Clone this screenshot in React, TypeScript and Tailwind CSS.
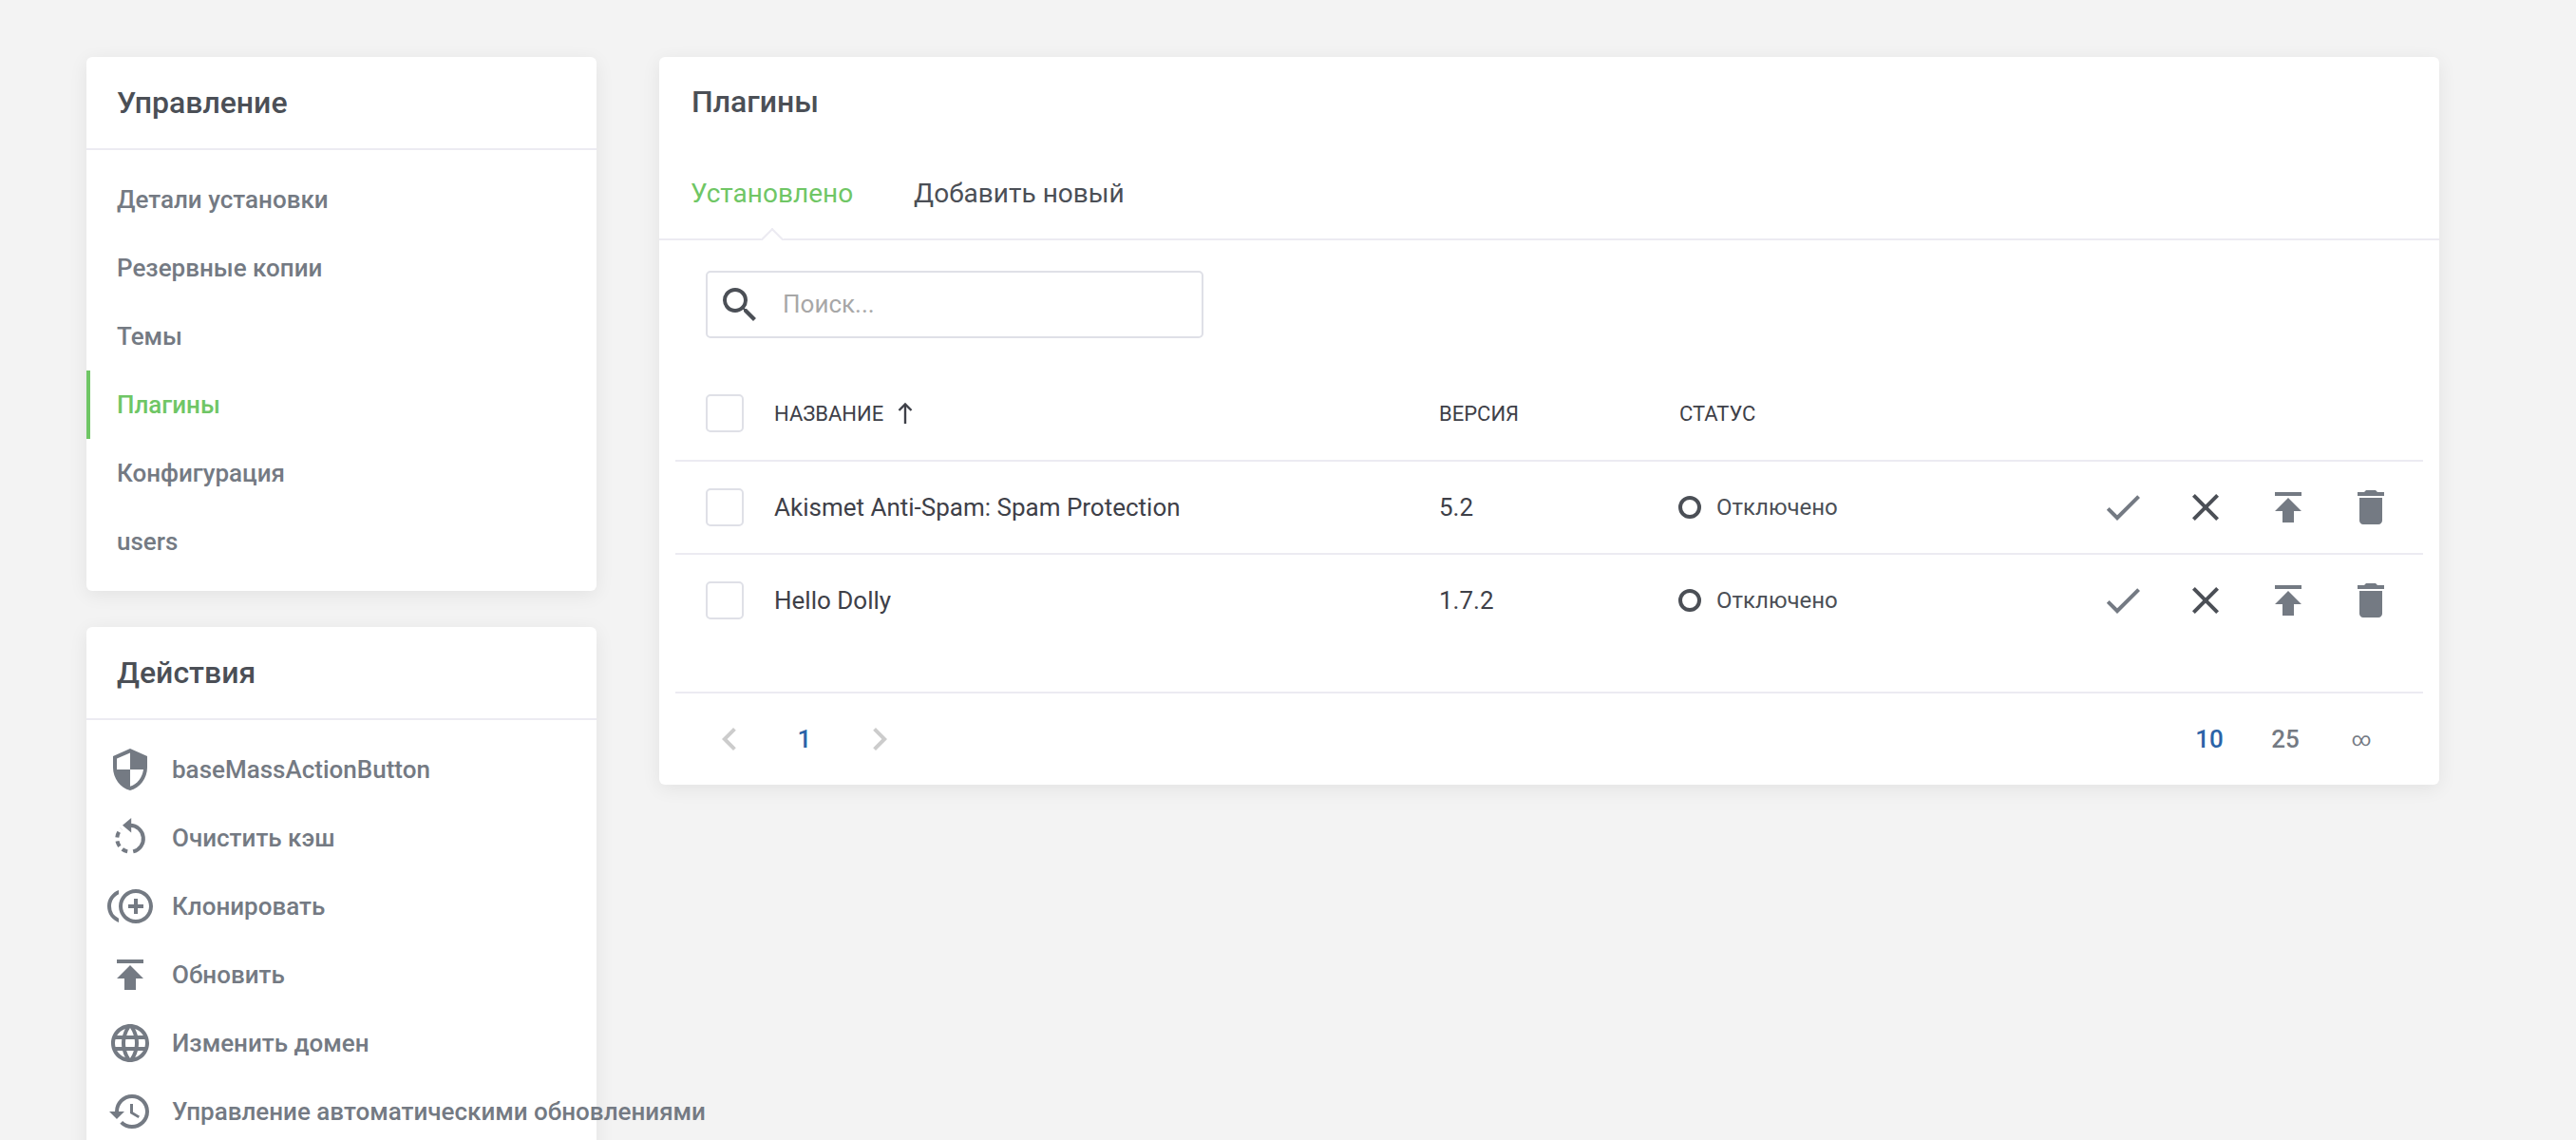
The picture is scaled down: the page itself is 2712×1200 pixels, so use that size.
import { MdSearch, MdCheck, MdClose, MdPublish, MdDelete, MdSecurity, MdControlPointDuplicate, MdLanguage, MdHistory, MdChevronLeft, MdChevronRight } from 'react-icons/md';
import type { ReactNode } from 'react';

const navItems = ['Детали установки', 'Резервные копии', 'Темы', 'Плагины', 'Конфигурация', 'users'];

const plugins = [
  { name: 'Akismet Anti-Spam: Spam Protection', version: '5.2' },
  { name: 'Hello Dolly', version: '1.7.2' },
];

function ClearCacheIcon() {
  return (
    <svg viewBox="0 0 24 24" width="48" height="48" fill="none" stroke="currentColor" strokeWidth="2">
      <path d="M12.6 1.5 L8 5.4 L12.6 9.3 Z" fill="currentColor" stroke="none" />
      <path d="M12 5.4 A7 7 0 0 1 13.6 19.2" />
      <path d="M10.6 19.2 A7 7 0 0 1 7.4 7.2" strokeDasharray="3 2" />
    </svg>
  );
}

function SortArrow() {
  return (
    <svg viewBox="0 0 16 24" width="16" height="24" fill="none" stroke="currentColor" strokeWidth="2.4">
      <path d="M8 23 V3" />
      <path d="M1.5 9 L8 2.5 L14.5 9" />
    </svg>
  );
}

const actions: { icon: ReactNode; label: string }[] = [
  { icon: <MdSecurity size={48} />, label: 'baseMassActionButton' },
  { icon: <ClearCacheIcon />, label: 'Очистить кэш' },
  { icon: <MdControlPointDuplicate size={48} />, label: 'Клонировать' },
  { icon: <MdPublish size={48} />, label: 'Обновить' },
  { icon: <MdLanguage size={48} />, label: 'Изменить домен' },
  { icon: <MdHistory size={48} />, label: 'Управление автоматическими обновлениями' },
];

function Checkbox() {
  return <div className="w-[40px] h-[40px] bg-white border-2 border-[#dfe0e7] rounded-[5px] shrink-0" />;
}

function Card({ children, className = '' }: { children: ReactNode; className?: string }) {
  return <div className={`bg-white rounded-[6px] shadow-[0_4px_20px_rgba(0,0,0,0.07)] ${className}`}>{children}</div>;
}

function CardHeader({ title }: { title: string }) {
  return (
    <div className="h-[98px] pl-[32px] flex items-center border-b-2 border-[#ecebf2] text-[32px] font-medium text-[#4b4f56]">
      {title}
    </div>
  );
}

export default function App() {
  return (
    <div className="h-screen overflow-hidden bg-[#f3f3f3] flex pl-[91px] pr-[144px] pt-[60px] gap-[66px] font-[Roboto,sans-serif]">
      {/* sidebar */}
      <div className="w-[537px] shrink-0 flex flex-col gap-[38px]">
        <Card>
          <CardHeader title="Управление" />
          <div className="pt-[16px] pb-[16px]">
            {navItems.map(item => {
              const active = item === 'Плагины';
              return (
                <div
                  key={item}
                  className={`h-[72px] flex items-center text-[26px] font-medium border-l-4 pl-[28px] ${
                    active ? 'border-[#6fc665] text-[#6fc665]' : 'border-transparent text-[#747a83]'
                  }`}
                >
                  {item}
                </div>
              );
            })}
          </div>
        </Card>

        <Card className="h-[800px] shrink-0">
          <CardHeader title="Действия" />
          <div className="pt-[16px]">
            {actions.map(a => (
              <div key={a.label} className="h-[72px] flex items-center text-[#747a83] pl-[22px] gap-[20px]">
                <span className="w-[48px] h-[48px] shrink-0">{a.icon}</span>
                <span className="text-[26px] font-medium whitespace-nowrap">{a.label}</span>
              </div>
            ))}
          </div>
        </Card>
      </div>

      {/* main panel */}
      <div className="flex-1 min-w-0">
        <Card className="h-[766px] flex flex-col">
          <div className="h-[94px] pl-[34px] flex items-center text-[32px] font-medium text-[#4b4f56]">Плагины</div>

          <div className="relative h-[99px] pt-[3px] pl-[33px] flex items-center gap-[64px] border-b-2 border-[#ecebf2] text-[28px]">
            <span className="text-[#6fc665]">Установлено</span>
            <span className="text-[#4b4f56]">Добавить новый</span>
            <div className="absolute left-[107px] bottom-[-2px] w-[24px] h-[14px] overflow-hidden">
              <div className="w-[20px] h-[20px] mx-auto mt-[5px] rotate-45 bg-white border-l-2 border-t-2 border-[#ecebf2]" />
            </div>
          </div>

          <div className="pl-[49px] pt-[32px]">
            <div className="w-[524px] h-[71px] border-2 border-[#dfe0e7] rounded-[5px] flex items-center pl-[10px] text-[#a7a7a7]">
              <MdSearch size={48} className="text-[#4b4f56] shrink-0" />
              <span className="ml-[21px] text-[26px]">Поиск...</span>
            </div>
          </div>

          <div className="mx-[17px] mt-[30px] flex-1 flex flex-col">
            <div className="h-[100px] pl-[32px] flex items-center border-b-2 border-[#ecebf2] text-[22px] text-[#3e4048]">
              <Checkbox />
              <div className="ml-[32px] w-[700px] flex items-center gap-[15px]">
                НАЗВАНИЕ
                <SortArrow />
              </div>
              <div className="w-[253px]">ВЕРСИЯ</div>
              <div>СТАТУС</div>
            </div>

            {plugins.map((p, i) => (
              <div
                key={p.name}
                className={`pl-[32px] pr-[12px] flex items-center text-[#3e4048] ${
                  i === 0 ? 'h-[98px] border-b-2 border-[#ecebf2]' : 'h-[96px]'
                }`}
              >
                <Checkbox />
                <div className="ml-[32px] w-[700px] text-[26px]">{p.name}</div>
                <div className="w-[253px] text-[26px]">{p.version}</div>
                <div className="flex items-center gap-[16px] text-[24px] text-[#4b4f56]">
                  <span className="w-[24px] h-[24px] ml-[-1px] rounded-full border-4 border-[#4b4f56]" />
                  Отключено
                </div>
                <div className="ml-auto flex">
                  <span className="w-[87px] flex justify-center text-[#747a83]"><MdCheck size={48} /></span>
                  <span className="w-[87px] flex justify-center text-[#4b4f56]"><MdClose size={48} /></span>
                  <span className="w-[87px] flex justify-center text-[#747a83]"><MdPublish size={48} /></span>
                  <span className="w-[87px] flex justify-center text-[#747a83]"><MdDelete size={48} /></span>
                </div>
              </div>
            ))}

            <div className="h-[50px] border-b-2 border-[#ecebf2]" />

            <div className="h-[96px] flex items-center pl-[33px] pr-[25px] text-[26px] font-medium">
              <MdChevronLeft size={48} className="text-[#cccccc]" />
              <span className="w-[110px] text-center text-[#2b63a8]">1</span>
              <MdChevronRight size={48} className="text-[#cccccc]" />
              <div className="ml-auto flex items-center">
                <span className="w-[80px] text-center text-[#2b63a8]">10</span>
                <span className="w-[80px] text-center text-[#747a83]">25</span>
                <span className="w-[80px] text-center text-[#747a83] text-[20px] font-normal">∞</span>
              </div>
            </div>
          </div>
        </Card>
      </div>
    </div>
  );
}
